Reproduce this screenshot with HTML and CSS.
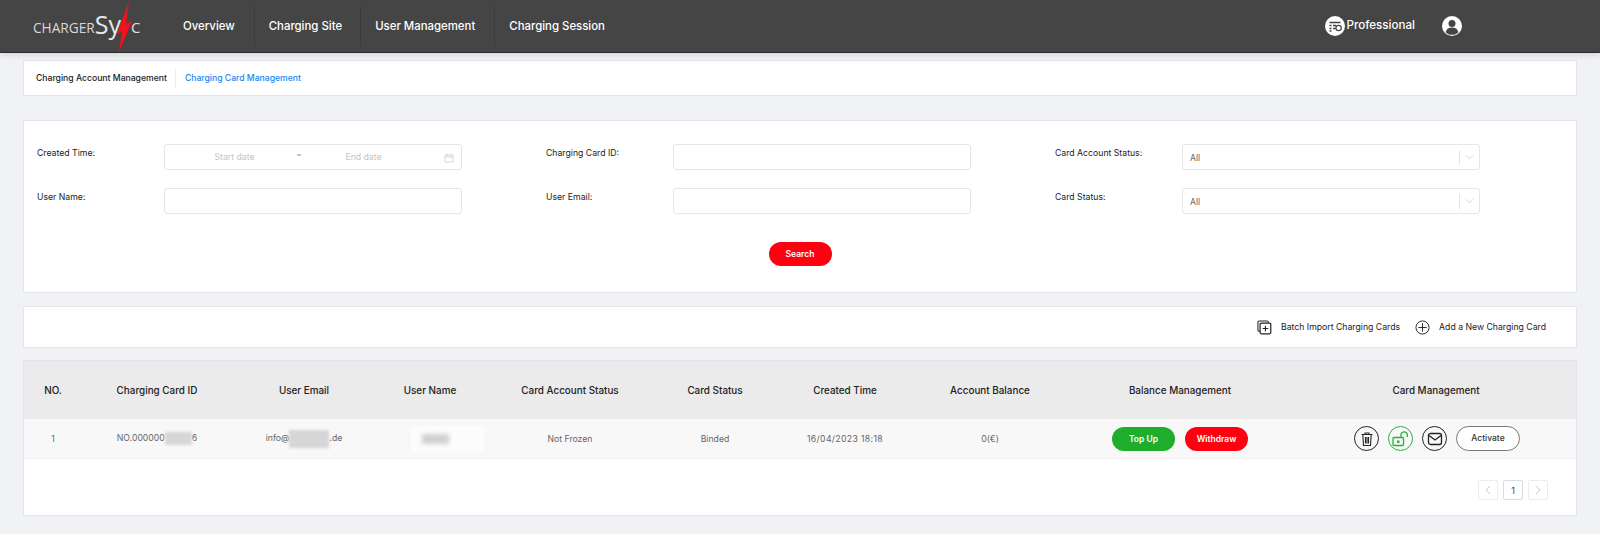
FILE: index.html
```html
<!DOCTYPE html>
<html lang="en">
<head>
<meta charset="utf-8">
<title>ChargerSync</title>
<link rel="stylesheet" href="styles.css">
</head>
<body>
<header class="topbar">
  <div class="logo">
    <span class="logo-charger">CHARGER</span><span class="logo-sy">Sy</span>
    <svg class="logo-bolt" viewBox="0 0 24 52" width="24" height="52"><path d="M19 2 L16 24 L22 21 L9 52 L12 31 L7 34 Z" fill="#f5101c"/></svg>
    <span class="logo-c">C</span>
  </div>
  <nav class="nav">
    <a class="nav-item">Overview</a>
    <a class="nav-item">Charging Site</a>
    <a class="nav-item">User Management</a>
    <a class="nav-item">Charging Session</a>
  </nav>
  <div class="account">
    <svg class="plan-icon" viewBox="0 0 20 20" width="20" height="20">
      <circle cx="10" cy="10" r="10" fill="#fff"/>
      <path d="M4.500 6.500h11M4.500 9.500h2M4.500 12.500h2M8 9.500h3M8 12.500h2.500M4.500 15h2" stroke="#454545" stroke-width="1.400" fill="none"/>
      <circle cx="13.600" cy="12" r="2.700" fill="none" stroke="#454545" stroke-width="1.200"/>
    </svg>
    <span class="plan-name">Professional</span>
    <svg class="user-icon" viewBox="0 0 20 20" width="20" height="20">
      <circle cx="10" cy="10" r="10" fill="#fff"/>
      <circle cx="10" cy="7.600" r="3.500" fill="#454545"/>
      <path d="M3.600 16.200c.8-3.200 3.300-4.600 6.400-4.600s5.600 1.400 6.400 4.600c-1.500 1.600-3.800 2.600-6.400 2.600s-4.900-1-6.400-2.600z" fill="#454545"/>
    </svg>
  </div>
</header>

<main class="page">
  <section class="card tabs">
    <a class="tab">Charging Account Management</a>
    <a class="tab tab-active">Charging Card Management</a>
  </section>

  <section class="card filters">
    <div class="filter-grid">
      <div class="field">
        <label class="field-label">Created Time:</label>
        <div class="control range">
          <span class="range-text">Start date</span>
          <span class="range-sep">~</span>
          <span class="range-text">End date</span>
          <svg class="cal-icon" viewBox="0 0 10 10" width="10" height="10"><path d="M1.500 2h7a.5.5 0 0 1 .5.5v6a.5.5 0 0 1-.5.5h-7a.5.5 0 0 1-.5-.5v-6a.5.5 0 0 1 .5-.5zM1 4h8M3 1v2M7 1v2" fill="none" stroke="#c4c4c4" stroke-width=".7"/></svg>
        </div>
      </div>
      <div class="field">
        <label class="field-label">Charging Card ID:</label>
        <input class="control" type="text">
      </div>
      <div class="field">
        <label class="field-label">Card Account Status:</label>
        <div class="control select">
          <span class="select-value">All</span>
          <span class="select-arrow"><svg viewBox="0 0 10 6" width="9" height="6"><path d="M1 1l4 4 4-4" fill="none" stroke="#c4c4c4" stroke-width=".8"/></svg></span>
        </div>
      </div>
      <div class="field">
        <label class="field-label">User Name:</label>
        <input class="control" type="text">
      </div>
      <div class="field">
        <label class="field-label">User Email:</label>
        <input class="control" type="text">
      </div>
      <div class="field">
        <label class="field-label">Card Status:</label>
        <div class="control select">
          <span class="select-value">All</span>
          <span class="select-arrow"><svg viewBox="0 0 10 6" width="9" height="6"><path d="M1 1l4 4 4-4" fill="none" stroke="#c4c4c4" stroke-width=".8"/></svg></span>
        </div>
      </div>
    </div>
    <div class="search-row"><button class="pill pill-red search-btn">Search</button></div>
  </section>

  <section class="card toolbar">
    <a class="tool">
      <svg viewBox="0 0 16 16" width="15" height="15"><path d="M3 12H2.200A1.200 1.200 0 0 1 1 10.800V2.200A1.200 1.200 0 0 1 2.200 1h8.600A1.200 1.200 0 0 1 12 2.200V3" fill="none" stroke="#222" stroke-width="1.100"/><rect x="3.300" y="3.300" width="11.400" height="11.400" rx="1.300" fill="#fff" stroke="#222" stroke-width="1.300"/><path d="M9 6v6M6 9h6" stroke="#222" stroke-width="1.200"/></svg>
      <span>Batch Import Charging Cards</span>
    </a>
    <a class="tool">
      <svg viewBox="0 0 16 16" width="15" height="15"><circle cx="8" cy="8" r="7" fill="none" stroke="#222" stroke-width="1"/><path d="M8 3.500v9M3.500 8h9" stroke="#222" stroke-width="1"/></svg>
      <span>Add a New Charging Card</span>
    </a>
  </section>

  <section class="card table-card">
    <div class="row row-head">
      <div>NO.</div><div>Charging Card ID</div><div>User Email</div><div>User Name</div><div>Card Account Status</div><div>Card Status</div><div>Created Time</div><div>Account Balance</div><div>Balance Management</div><div>Card Management</div>
    </div>
    <div class="row row-body">
      <div>1</div>
      <div>NO.000000<span class="mask mask-id"></span>6</div>
      <div>info@<span class="mask mask-email"></span>.de</div>
      <div class="name-cell"><span class="mask-name"><span class="mask-core"></span></span></div>
      <div>Not Frozen</div>
      <div>Binded</div>
      <div class="cell-date">16/04/2023 18:18</div>
      <div>0(€)</div>
      <div class="actions actions-balance">
        <button class="pill pill-green">Top Up</button>
        <button class="pill pill-red">Withdraw</button>
      </div>
      <div class="actions actions-card">
        <span class="round">
          <svg viewBox="0 0 16 16" width="16" height="16"><path d="M2.500 3.500h11M6 3.500V2h4v1.500M3.800 3.500l.7 11h7l.7-11M6.500 6v6.500M8 6v6.500M9.500 6v6.500" fill="none" stroke="#222" stroke-width="1.100"/></svg>
        </span>
        <span class="round round-green">
          <svg viewBox="0 0 18 16" width="18" height="16"><rect x="1" y="6.500" width="10.500" height="8" rx="1" fill="none" stroke="#27b43a" stroke-width="1.300"/><path d="M9 6.500V4a3.200 3.200 0 0 1 6.400 0v2" fill="none" stroke="#27b43a" stroke-width="1.300"/><rect x="5" y="9.500" width="2.500" height="2.500" fill="#27b43a"/></svg>
        </span>
        <span class="round">
          <svg viewBox="0 0 16 16" width="16" height="16"><rect x="1.500" y="2.500" width="13" height="11" rx="2" fill="none" stroke="#222" stroke-width="1.300"/><path d="M2 4.500l6 4.500 6-4.500" fill="none" stroke="#222" stroke-width="1.300"/></svg>
        </span>
        <button class="pill pill-outline">Activate</button>
      </div>
    </div>
    <div class="pager">
      <span class="page-btn page-muted"><svg viewBox="0 0 6 10" width="6" height="10"><path d="M5 1L1 5l4 4" fill="none" stroke="#c8c8c8"/></svg></span>
      <span class="page-btn page-current">1</span>
      <span class="page-btn page-muted"><svg viewBox="0 0 6 10" width="6" height="10"><path d="M1 1l4 4-4 4" fill="none" stroke="#c8c8c8"/></svg></span>
    </div>
  </section>
</main>
</body>
</html>
```

FILE: styles.css
```css
* { box-sizing: border-box; }
html, body { margin: 0; padding: 0; }
body {
  height: 534px;
  overflow: hidden;
  background: #f0f2f5;
  font-family: Inter, "Noto Sans", "Liberation Sans", sans-serif;
  color: #222;
}

/* top bar */
.topbar {
  display: flex;
  align-items: center;
  height: 53px;
  background: #454545;
  border-bottom: 1px solid #2c2c2c;
  box-shadow: 0 2px 6px rgba(0, 0, 0, .12);
  color: #fff;
}
.logo {
  display: flex;
  align-items: flex-end;
  width: 173px;
  height: 52px;
  padding: 0 0 19px 33px;
  flex: none;
}
.logo-charger { font-size: 13.700px; line-height: 10px; color: #d8d8d8; font-family: "Open Sans", sans-serif; }
.logo-sy { font-size: 25px; line-height: 18px; color: #e8e8e8; font-weight: 400; font-family: "Open Sans", sans-serif; }
.logo-bolt { margin: 0 -3px -19px -11px; flex: none; }
.logo-c { font-size: 15px; line-height: 11px; color: #e0e0e0; font-family: "Open Sans", sans-serif; }

.nav { display: flex; align-items: center; height: 40px; }
.nav-item {
  display: flex;
  align-items: center;
  height: 40px;
  padding: 0 14px;
  font-size: 11.400px;
  font-weight: 500;
  border-left: 1px solid #3a3a3a;
  white-space: nowrap;
}
.nav-item:first-child { border-left: 0; padding: 0 19px 0 10px; }
.nav-item:nth-child(2) { padding-right: 18px; }
.nav-item:nth-child(3) { padding-right: 19px; }

.account { display: flex; align-items: center; margin-left: auto; padding-right: 138px; }
.plan-name { font-size: 11.600px; font-weight: 500; margin: -3px 27px 0 2px; }

/* cards */
.page { padding: 7px 23px 0; }
.card {
  background: #fff;
  border: 1px solid #e4e5e8;
  border-radius: 1px;
}

.tabs { display: flex; align-items: center; height: 36px; padding-left: 12px; }
.tab { font-size: 8.650px; font-weight: 500; color: #222; padding-right: 8px; }
.tab-active { color: #1c86f2; border-left: 1px solid #ececec; padding: 4px 0 4px 9px; }

.filters { margin-top: 24px; height: 173px; padding: 23px 13px 0; }
.filter-grid {
  display: grid;
  grid-template-columns: repeat(3, 509px);
  row-gap: 18px;
}
.field { display: flex; align-items: flex-start; }
.field-label { width: 127px; flex: none; font-size: 8.700px; line-height: 12px; padding-top: 3px; color: #222; }
.control {
  width: 297.500px;
  height: 26px;
  background: #fff;
  border: 1px solid #e6e6e6;
  border-radius: 3px;
  font-size: 8.700px;
  color: #666;
  padding: 0;
}
.range { display: flex; align-items: center; position: relative; }
.range-text { color: #c4c4c4; width: 91px; text-align: center; }
.range-text:first-child { margin-left: 24px; }
.range-sep { color: #8a8a8a; width: 38px; font-size: 7px; text-align: center; margin-top: -6px; }
.cal-icon { position: absolute; right: 7px; top: 8px; }
.select { display: flex; align-items: center; justify-content: space-between; padding-left: 7px; }
.select-value { padding-top: 1px; }
.select-arrow {
  display: flex;
  align-items: center;
  justify-content: center;
  width: 20px;
  height: 15px;
  border-left: 1px solid #e6e6e6;
}

.search-row { display: flex; justify-content: center; margin-top: 28px; }
.pill {
  height: 24px;
  width: 63px;
  border: 0;
  border-radius: 12px;
  color: #fff;
  font-family: inherit;
  font-size: 8.500px;
  font-weight: 600;
  padding: 0;
}
.pill-red { background: #ff0011; }
.pill-green { background: #1fae2c; }
.pill-outline { background: #fff; color: #333; border: 1px solid #777; height: 25px; width: 64px; border-radius: 13px; font-weight: 500; }

.toolbar {
  display: flex;
  justify-content: flex-end;
  align-items: center;
  gap: 15px;
  margin-top: 13px;
  height: 42px;
  padding-right: 30px;
}
.tool { display: flex; align-items: center; gap: 9px; font-size: 8.700px; font-weight: 400; color: #222; }

/* table */
.table-card { margin-top: 12px; height: 156px; }
.row {
  display: grid;
  grid-template-columns: 58px 150px 144px 108px 172px 118px 142px 148px 232px 1fr;
  align-items: center;
  text-align: center;
}
.row-head { height: 58px; background: #ebebeb; font-size: 9.900px; font-weight: 500; }
.row-body { height: 40px; background: #f8f8f8; border-bottom: 1px solid #efefef; font-size: 8.700px; color: #666; }
.cell-date { letter-spacing: .35px; }

.mask { display: inline-block; vertical-align: middle; background: #d6d6d6; filter: blur(1.500px); }
.mask-id { width: 27px; height: 13px; }
.mask-email { width: 40px; height: 18px; }
.name-cell { display: flex; justify-content: center; }
.mask-name { display: flex; align-items: center; width: 83px; height: 26px; background: #fcfcfc; padding-left: 11px; margin-left: 35px; }
.mask-core { width: 27px; height: 10px; background: #d0d0d0; filter: blur(2px); }

.actions { display: flex; align-items: center; }
.actions-balance { justify-content: center; gap: 10px; }
.actions-card { padding-left: 58px; gap: 9px; }
.round {
  display: flex;
  align-items: center;
  justify-content: center;
  width: 25px;
  height: 25px;
  flex: none;
  border: 1px solid #222;
  border-radius: 50%;
}
.round-green { border-color: #27b43a; }
.actions-card .pill-outline { margin-top: -1px; }

.pager { display: flex; justify-content: flex-end; gap: 5px; padding: 21px 28px 0 0; }
.page-btn {
  display: flex;
  align-items: center;
  justify-content: center;
  width: 20px;
  height: 20px;
  background: #fff;
  border: 1px solid #ececec;
  border-radius: 2px;
  font-size: 9px;
  color: #444;
}
.page-current { border-color: #dcdcdc; }
```
